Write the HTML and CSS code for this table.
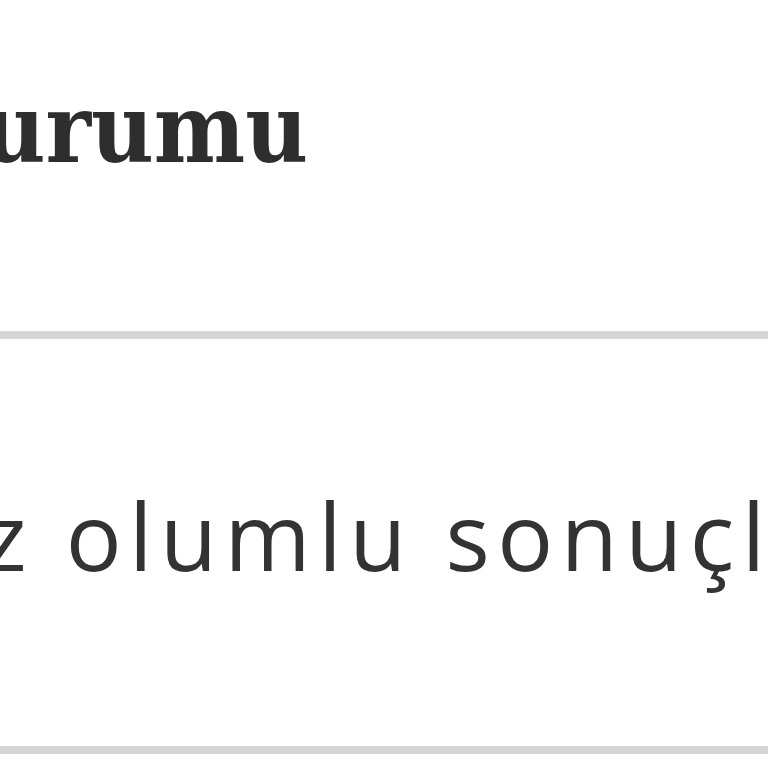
FILE: index.html
```html
<!DOCTYPE html>
<html lang="tr">
<head>
<meta charset="utf-8">
<link rel="stylesheet" href="styles.css">
</head>
<body>
<div class="page">
  <section class="block head">
    <div class="title-row">
      <h2 class="title">Bakım durumu</h2>
    </div>
  </section>
  <section class="block body">
    <p class="text-row"><span class="lead">Sonuçlarımız</span><span class="rest"> olumlu sonuçlar verdi</span></p>
  </section>
</div>
</body>
</html>
```

FILE: styles.css
```css
html, body {
  margin: 0;
  padding: 0;
  background: #ffffff;
  overflow: hidden;
}
.page {
  width: 768px;
  height: 768px;
  overflow: hidden;
}
.block {
  border-bottom: 8px solid #d6d6d6;
  box-sizing: border-box;
  white-space: nowrap;
}
.head {
  height: 339px;
  padding-top: 81px;
}
.body {
  height: 415px;
  padding-top: 150px;
}
.title-row {
  width: 308px;
  display: flex;
  justify-content: flex-end;
}
.title {
  flex: none;
  margin: 0;
  font-family: "DejaVu Serif", serif;
  font-stretch: condensed;
  font-weight: bold;
  font-size: 96px;
  line-height: 1;
  color: #2e2e2e;
}
.text-row {
  margin: 0;
  display: flex;
  font-family: "Open Sans", sans-serif;
  font-size: 93px;
  letter-spacing: 7.5px;
  line-height: 1;
  color: #333333;
}
.lead {
  flex: none;
  width: 34px;
  display: flex;
  justify-content: flex-end;
}
.rest {
  flex: none;
  white-space: pre;
}
```
